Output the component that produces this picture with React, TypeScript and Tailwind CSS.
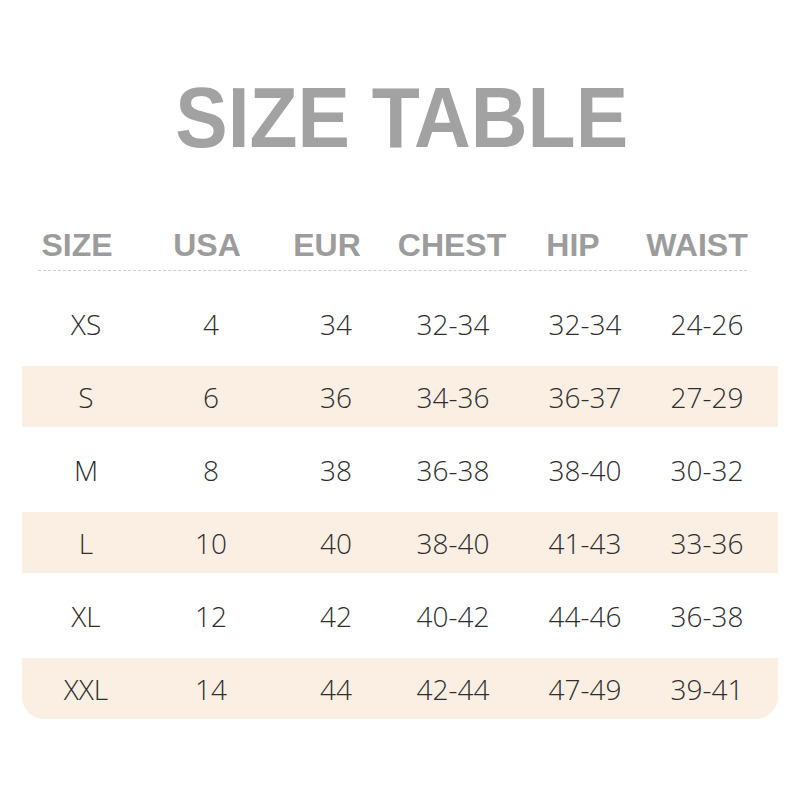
const headers = ["SIZE", "USA", "EUR", "CHEST", "HIP", "WAIST"];

const rows = [
  ["XS", "4", "34", "32-34", "32-34", "24-26"],
  ["S", "6", "36", "34-36", "36-37", "27-29"],
  ["M", "8", "38", "36-38", "38-40", "30-32"],
  ["L", "10", "40", "38-40", "41-43", "33-36"],
  ["XL", "12", "42", "40-42", "44-46", "36-38"],
  ["XXL", "14", "44", "42-44", "47-49", "39-41"],
];

const cols = "grid grid-cols-[128px_122px_128px_106px_158px_86px]";

// header labels sit a little left of the column values
const headerShift = ["pr-[18px]", "pr-[8px]", "pr-[18px]", "pr-[2px]", "pr-[24px]", "pr-[20px]"];

export default function App() {
  return (
    <div className="w-[800px] h-[800px] bg-white overflow-hidden">
      <div className="mt-[75px] flex justify-center">
        <h1 className="pl-[3px] text-[85px] leading-none font-bold text-[#a2a2a2] font-['Liberation_Sans',Arial,sans-serif] scale-x-[0.925]">
          SIZE TABLE
        </h1>
      </div>

      <div className="mt-[69px] mx-[22px]">
        <div className={`${cols} text-[32px] leading-none font-bold text-[#9c9c9c] font-['Liberation_Sans',Arial,sans-serif]`}>
          {headers.map((h, i) => (
            <div key={h} className={`flex justify-center ${headerShift[i]}`}>
              <span className="whitespace-nowrap">{h}</span>
            </div>
          ))}
        </div>
        <div className="mt-[9px] ml-[16px] w-[709px] border-t border-dashed border-[#cfcfcf]" />

        <div className="mt-[22px] flex flex-col gap-[12px] font-['Open_Sans',sans-serif] font-light text-[28px] text-[#2e2e2e]">
          {rows.map((r, i) => (
            <div
              key={r[0]}
              className={`${cols} h-[61px] items-center ${
                i % 2 === 1 ? "bg-[#fbefe4]" : ""
              } ${i === rows.length - 1 ? "rounded-b-[22px]" : ""}`}
            >
              {r.map((c, j) => (
                <div key={j} className="flex justify-center">
                  <span className="whitespace-nowrap">{c}</span>
                </div>
              ))}
            </div>
          ))}
        </div>
      </div>
    </div>
  );
}
